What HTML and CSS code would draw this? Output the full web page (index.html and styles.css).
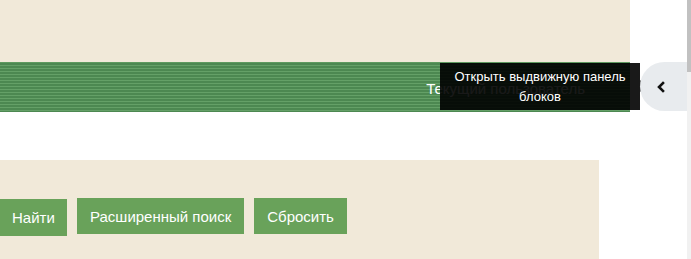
FILE: index.html
```html
<!DOCTYPE html>
<html lang="ru">
<head>
<meta charset="utf-8">
<title>Панель</title>
<link rel="stylesheet" href="styles.css">
</head>
<body>
<div class="page">
  <div class="header-top"></div>
  <div class="header-bar">
    <span class="user">Текущий пользователь</span>
  </div>
  <div class="spacer"></div>
  <div class="search">
    <div class="actions">
      <button class="btn btn-find">Найти</button>
      <button class="btn">Расширенный поиск</button>
      <button class="btn">Сбросить</button>
    </div>
  </div>
</div>
<div class="tooltip">Открыть выдвижную панель блоков</div>
<button class="toggle" aria-label="Открыть выдвижную панель блоков">
  <svg width="10" height="12" viewBox="0 0 10 12"><path d="M7 2 L3 6 L7 10" fill="none" stroke="#111" stroke-width="2.6" stroke-linecap="square"/></svg>
</button>
<div class="scrollbar"><div class="thumb"></div></div>
</body>
</html>
```
FILE: styles.css
```css
html, body {
  margin: 0;
  padding: 0;
  background: #fff;
  overflow: hidden;
  font-family: "Liberation Sans", Arial, sans-serif;
}
.page {
  width: 687px;
  height: 259px;
  overflow: hidden;
}
.header-top {
  width: 630px;
  height: 62px;
  background: #f1e9d9;
}
.header-bar {
  width: 630px;
  height: 50px;
  box-sizing: border-box;
  background: repeating-linear-gradient(to bottom, #4c8851 0, #4c8851 2px, #64a067 2px, #64a067 3px);
  border-top: 1px solid #5e9a5f;
  display: flex;
  align-items: center;
  justify-content: flex-end;
  padding-right: 45px;
}
.user {
  color: #fff;
  font-size: 15px;
  margin-top: 1px;
}
.spacer {
  height: 48px;
}
.search {
  width: 599px;
  height: 120px;
  background: #f1e9d9;
  padding-top: 38px;
  box-sizing: border-box;
}
.actions {
  display: flex;
  gap: 10px;
  align-items: flex-start;
}
.btn {
  background: #69a25a;
  color: #fff;
  border: none;
  font-family: "Liberation Sans", Arial, sans-serif;
  font-size: 15px;
  height: 36px;
  padding: 0 13px;
  margin: 0;
}
.btn-find {
  width: 67px;
  height: 37px;
  margin-top: 1px;
  padding: 0 0 0 12px;
  text-align: left;
}
.tooltip {
  position: absolute;
  left: 440px;
  top: 63px;
  width: 200px;
  height: 47px;
  box-sizing: border-box;
  background: rgba(0, 0, 0, 0.9);
  color: #fff;
  font-size: 13px;
  line-height: 20px;
  text-align: center;
  padding: 4px 8px;
}
.tooltip::after {
  content: "";
  position: absolute;
  right: -6px;
  top: 17px;
  border-style: solid;
  border-width: 6px 0 6px 6px;
  border-color: transparent transparent transparent rgba(0, 0, 0, 0.9);
}
.toggle {
  position: absolute;
  left: 640px;
  top: 62px;
  width: 47px;
  height: 49px;
  border: none;
  padding: 0;
  margin: 0;
  background: #e8ebee;
  border-radius: 25px 0 0 25px;
  display: flex;
  align-items: center;
  justify-content: center;
  box-sizing: border-box;
}
.toggle svg {
  display: block;
  margin-left: -5px;
}
.scrollbar {
  position: absolute;
  left: 687px;
  top: 0;
  width: 4px;
  height: 259px;
  background: #f1f1f1;
}
.thumb {
  width: 4px;
  height: 72px;
  background: #c1c1c1;
}
```
